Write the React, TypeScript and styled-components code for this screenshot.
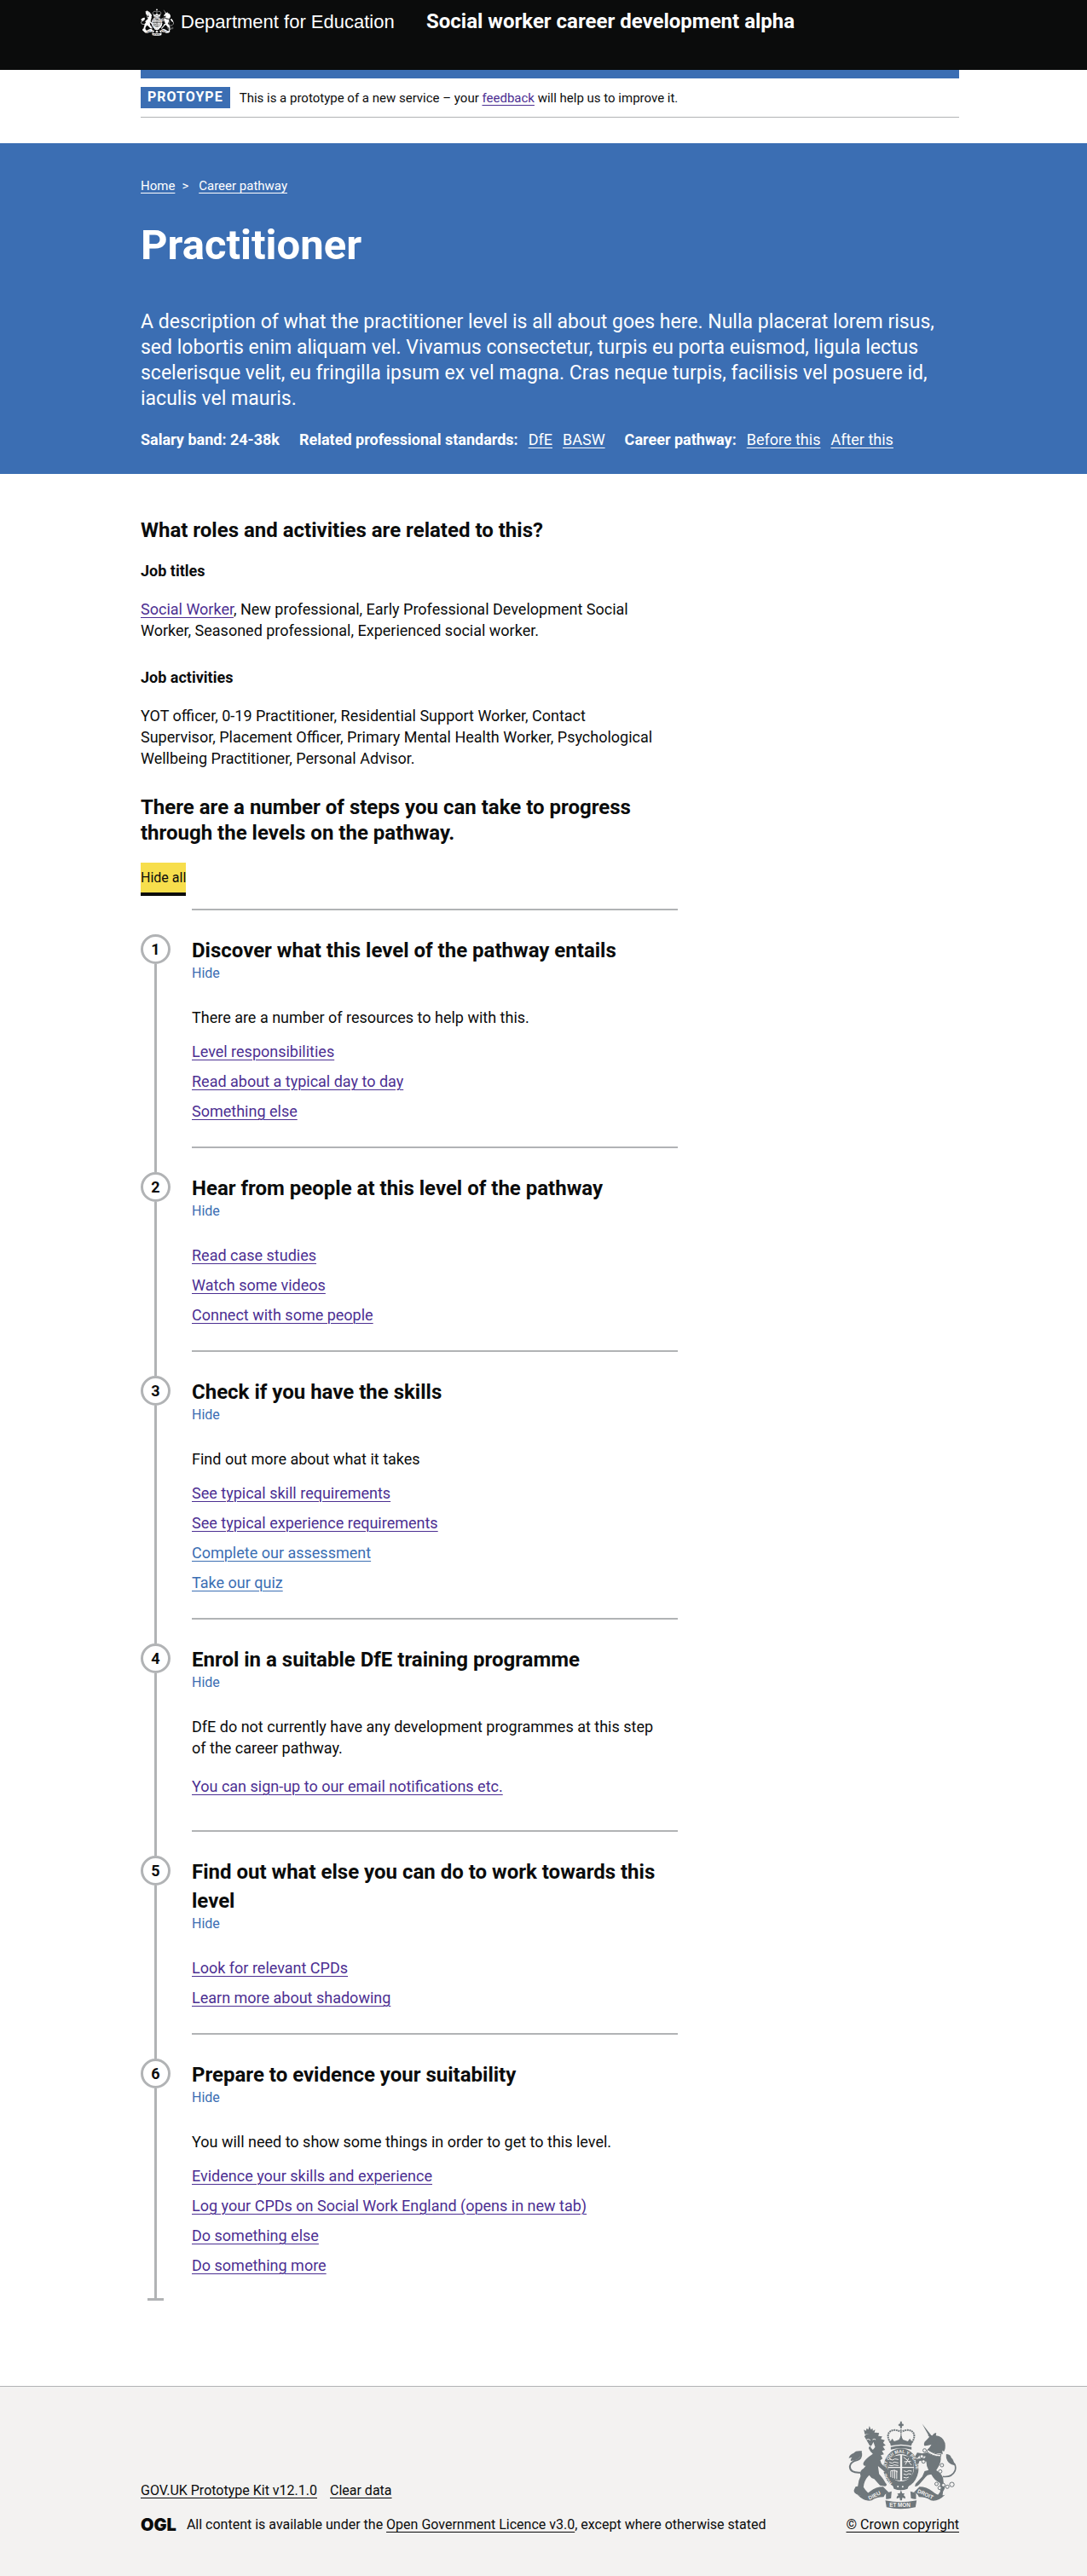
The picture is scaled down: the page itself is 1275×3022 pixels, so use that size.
import React, { useId, useState } from "react";
import styled, { createGlobalStyle } from "styled-components";

const color = {
  ink: "#0b0c0c",
  brand: "#3b6eb3",
  visited: "#4c2f92",
  border: "#b1b3b5",
  focus: "#f7de4c",
  footer: "#f3f2f1",
  crest: "#6f777b",
  white: "#ffffff",
};

const GlobalStyle = createGlobalStyle`
  *, *::before, *::after { box-sizing: border-box; }
  body {
    margin: 0;
    background: ${color.white};
    color: ${color.ink};
    font-family: Roboto, "Liberation Sans", Arial, sans-serif;
    font-size: 18px;
    line-height: 25px;
    -webkit-font-smoothing: antialiased;
  }
  h1, h2, h3, p, ul, ol { margin: 0; padding: 0; }
  ul, ol { list-style: none; }
`;

/* ---------- shared ---------- */

const Band = styled.div`
  padding: 0 15px 0 30px;
`;

const Container = styled.div`
  max-width: 960px;
  margin: 0 auto;
`;

const Link = styled.a<{ $tone?: string }>`
  color: ${(p) => p.$tone ?? color.visited};
  text-decoration: underline;
  text-decoration-thickness: 1px;
  text-underline-offset: 3px;
`;

/* ---------- header ---------- */

const HeaderBand = styled(Band).attrs({ as: "header" })`
  background: ${color.ink};
  color: ${color.white};
  height: 82px;
`;

const HeaderRow = styled(Container)`
  display: grid;
  grid-template-columns: 335px 1fr;
  align-items: start;
`;

const Brand = styled.a`
  display: flex;
  align-items: center;
  gap: 8px;
  padding-top: 10px;
  color: inherit;
  text-decoration: none;
  font-family: "Liberation Sans", Arial, sans-serif;
  font-size: 22px;
  line-height: 32px;
`;

const ServiceName = styled.a`
  padding-top: 10px;
  color: inherit;
  font-size: 24px;
  line-height: 30px;
  font-weight: 700;
  text-decoration: none;
`;

const BrandStrip = styled(Container)`
  height: 10px;
  background: ${color.brand};
`;

const PhaseBanner = styled(Container)`
  display: flex;
  align-items: center;
  gap: 11px;
  padding: 10px 0;
  margin-bottom: 30px;
  border-bottom: 1px solid ${color.border};
  font-size: 15px;
  line-height: 20px;
`;

const PhaseTag = styled.strong`
  padding: 2px 8px 3px;
  background: ${color.brand};
  color: ${color.white};
  font-size: 16px;
  letter-spacing: 1px;
`;

/* ---------- hero ---------- */

const Hero = styled(Band).attrs({ as: "section" })`
  padding-top: 40px;
  padding-bottom: 28px;
  background: ${color.brand};
  color: ${color.white};
`;

const Breadcrumbs = styled.ol`
  display: flex;
  font-size: 15px;
  line-height: 20px;

  li + li::before {
    content: ">";
    margin: 0 12px 0 8px;
  }
`;

const PageTitle = styled.h1`
  margin-top: 35px;
  font-size: 49px;
  line-height: 50px;
  font-weight: 700;
`;

const Lead = styled.p`
  margin-top: 50px;
  font-size: 23px;
  line-height: 30px;
`;

const Facts = styled.ul`
  display: flex;
  flex-wrap: wrap;
  gap: 0 23px;
  margin-top: 20px;
`;

const Fact = styled.li`
  display: flex;
  gap: 12px;
`;

const FactLabel = styled.span`
  font-weight: 700;
`;

/* ---------- body ---------- */

const Main = styled(Band).attrs({ as: "main" })`
  padding-top: 51px;
  padding-bottom: 100px;
`;

const Column = styled.div`
  max-width: 630px;
`;

const SectionTitle = styled.h2`
  font-size: 24px;
  line-height: 30px;
  font-weight: 700;
`;

const SubTitle = styled.h3`
  margin: 20px 0;
  font-size: 18px;
  line-height: 25px;
  font-weight: 700;
`;

const Paragraph = styled.p`
  margin-bottom: 30px;
  padding-right: 20px;
`;

const HideAll = styled.button`
  display: block;
  height: 39px;
  margin: 20px 0 15px;
  padding: 0;
  border: 0;
  border-bottom: 4px solid ${color.ink};
  background: ${color.focus};
  color: ${color.ink};
  font: inherit;
  font-size: 16px;
  line-height: 20px;
  cursor: pointer;
`;

/* ---------- step by step ---------- */

const StepItem = styled.li`
  display: grid;
  grid-template-columns: 35px 1fr;
  column-gap: 25px;
`;

const Rail = styled.div`
  display: flex;
  flex-direction: column;
  align-items: center;
`;

const RailLead = styled.span<{ $hidden?: boolean }>`
  width: 3px;
  height: 30px;
  background: ${(p) => (p.$hidden ? "transparent" : color.border)};
`;

const RailLine = styled.span`
  flex: 1;
  width: 3px;
  background: ${color.border};
`;

const RailEnd = styled.span`
  width: 19px;
  height: 3px;
  background: ${color.border};
`;

const StepNumber = styled.span`
  display: flex;
  align-items: center;
  justify-content: center;
  width: 35px;
  height: 35px;
  border: 3px solid ${color.border};
  border-radius: 50%;
  background: ${color.white};
  font-weight: 700;
`;

const StepBody = styled.div`
  border-top: 2px solid ${color.border};
  padding: 30px 0 29px;
`;

const StepTitle = styled.h2`
  font-size: 24px;
  line-height: 34px;
  font-weight: 700;
`;

const StepToggle = styled.button`
  display: block;
  padding: 0;
  border: 0;
  background: none;
  color: ${color.brand};
  font: inherit;
  font-size: 16px;
  line-height: 20px;
  cursor: pointer;
`;

const StepPanel = styled.div`
  margin-top: 29px;
`;

const StepText = styled.p<{ $roomy?: boolean }>`
  margin-bottom: ${(p) => (p.$roomy ? "20px" : "15px")};
  padding-right: 20px;
`;

const StepLinks = styled.ul<{ $roomy?: boolean }>`
  display: grid;
  gap: 10px;
  padding-bottom: ${(p) => (p.$roomy ? "10px" : "0")};
`;

/* ---------- footer ---------- */

const FooterBand = styled(Band).attrs({ as: "footer" })`
  padding-top: 40px;
  padding-bottom: 50px;
  border-top: 1px solid ${color.border};
  background: ${color.footer};
  font-size: 16px;
  line-height: 20px;
`;

const FooterRow = styled(Container)`
  display: flex;
  flex-wrap: wrap;
  justify-content: space-between;
  align-items: flex-end;
  gap: 30px;
`;

const FooterMeta = styled.div`
  display: grid;
  gap: 20px;
`;

const FooterLinks = styled.ul`
  display: flex;
  gap: 15px;
`;

const Licence = styled.div`
  display: flex;
  align-items: center;
  gap: 12px;
`;

const OglMark = styled.span`
  font-family: Inter, Lato, sans-serif;
  font-size: 20px;
  line-height: 20px;
  font-weight: 900;
`;

const CrownLink = styled(Link)`
  display: flex;
  flex-direction: column;
  align-items: center;
  gap: 8px;
`;

/* ---------- royal arms ---------- */

function Crest({ width, height, fill, ground }: { width: number; height: number; fill: string; ground: string }) {
  const garterId = useId();
  return (
    <svg width={width} height={height} viewBox="108 86 380 312" fill={fill} aria-hidden="true">
      {/* crown */}
      <circle cx="293" cy="100" r="6" />
      <path d="M290 88h6v24h-6zM284 97h18v6h-18z" />
      <g fill="none" stroke={fill}>
        <path d="M256 162C232 128 262 108 291 124" strokeWidth="6" strokeDasharray="6 2" />
        <path d="M331 162C355 128 325 108 296 124" strokeWidth="6" strokeDasharray="6 2" />
        <path d="M293 116v40" strokeWidth="5" strokeDasharray="5 2" />
      </g>
      <path d="M254 162l8-14 7 10 9-3 8-3 7-14 7 14 8 3 9 3 7-10 9 14-4 12q-36-10-72 0z" />
      <path d="M257 178q36-10 73 0v9q-37-8-73 0z" />
      {/* garter and shield */}
      <ellipse cx="293" cy="253" rx="62" ry="70" />
      <ellipse cx="293" cy="251" rx="46" ry="48" fill={ground} />
      <path d="M252 218q20-10 38-11v41h-42q0-18 4-30zM252 282q-4-14-4-30h42v44q-26-2-38-14zM297 252h41q-2 20-9 32-12 10-32 12z" />
      <path d="M297 207q20 2 33 11 8 12 8 30h-41z" />
      <g stroke={ground} fill="none" strokeWidth="3">
        <path d="M254 221l9 3 8-4 13 2M252 232l10 3 8-4 14 3M251 242l10 2 8-3 15 2" />
        <path d="M302 214q14 8 28 28M308 240l12-22M304 230l24-2" />
        <path d="M257 262v22M264 260v27M271 259v30M278 260v30M257 262q14-6 24 4" />
        <path d="M303 262l10 3 8-4 10 2M302 273l10 3 8-4 9 2M302 285l10 2 8-3" />
      </g>
      <path id={garterId} d="M262 305A52 59 0 1 1 324 305" fill="none" />
      <text fill={ground} fontFamily="Liberation Sans, sans-serif" fontWeight="700" fontSize="16">
        <textPath href={`#${garterId}`}>HONI SOIT QUI MAL Y PENSE</textPath>
      </text>
      <path d="M262 307q30 16 62-2l-8 20q-24 10-48 0z" />
      <circle cx="282" cy="317" r="3" fill={ground} />
      <circle cx="299" cy="318" r="3" fill={ground} />
      {/* lion */}
      <path d="M166 134l-4-17 8 4 2-9 6 5 4-13 5 13 6-5 1 9 8-4-4 17q-16-5-32 0z" />
      <path d="M164 141q6-10 20-10 18-6 32-2l-3 10 14 2-5 9 14 4-6 9 9 9-10 4 8 12-11 4 7 12-11 3 6 12-8 6q2 12 10 18l18 16q7 8-2 10l-10-4-24-20 4 28q16 18 23 32 8 8-2 11l-18-3-20-22q-12-4-18-14-18 18-20 42 6 10 16 20 10 10 0 15l-14-1-20-6q-19-8-15-19l5-10 8-2q2-22 10-36-6-18 10-26l8-10q-8 2-9-6 0-10 20-26l14-10q-10-8-15-20l4-8-4-8z" />
      <path d="M172 152q7-4 13 2M193 152q6-4 11 0M176 172q10 7 20 0" stroke={ground} strokeWidth="3" fill="none" />
      <path d="M196 160l6 18-8 10-8-8z" fill={ground} />
      <path d="M150 268q-38 2-37-22 2-16 26-22 16-6 14-24" fill="none" stroke={fill} strokeWidth="6" />
      <path d="M155 192q-22-2-28 7-14 4-18 18l12-3q-6 6-5 13 22-2 31-13 10-10 8-22z" />
      {/* unicorn */}
      <path d="M367 96l32 40-6 6z" />
      <path d="M376 160q6-6 17-18l-6-6q10-1 16 2 6-10 14-10l-1 10q24 2 32 26 3 20-4 30l-6-4 2 14-10-4q-24 2-44-13 8-6 14-18-12 4-22 5-5 0-4-8z" />
      <path d="M388 187q22 18 46 17l-2 8q-28 0-48-18z" fill="none" stroke={fill} strokeWidth="3" />
      <path d="M384 197q24 16 49 15 2 20-10 38l-6 10q18 10 24 27l2 18q10 14-2 30l-2 14q-4 10-20 4l12-18-1-30q-20-10-30-30-14-2-20 8l-22 26q-8 10-16 8l2-9 24-26 8-19 14-4q-8-14-8-30-12-4-24-2l-4 11-8-1-2-16 12-2 20-2 4-6-22-3-8 10-8-6 8-14 18 3z" />
      <path d="M440 282q32 4 43-20 8-26-18-36-12-6-10-22" fill="none" stroke={fill} strokeWidth="5" />
      <path d="M452 204q14-2 18 12 10 8 10 26-18-4-24-16-6-8-4-22z" />
      <g fill={ground} stroke={fill} strokeWidth="3">
        <circle cx="376" cy="190" r="6" />
        <circle cx="366" cy="211" r="6" />
        <circle cx="372" cy="229" r="6" />
        <circle cx="437" cy="242" r="6" />
        <circle cx="431" cy="264" r="6" />
        <circle cx="418" cy="308" r="6" />
        <circle cx="429" cy="322" r="6" />
        <circle cx="442" cy="312" r="6" />
        <circle cx="456" cy="318" r="6" />
        <circle cx="472" cy="310" r="8" />
      </g>
      {/* motto ribbon */}
      <path d="M140 346q24 6 44-12 22-16 46-16l20 20q-10 2-14 8l-4 8q-26 0-42 12-24 6-50-20zM448 346q-24 6-44-12-22-16-46-16l-20 20q10 2 14 8l4 8q26 0 42 12 24 6 50-20z" />
      <path d="M238 366q52 12 110 0l-4 24q-52 12-102 0zM240 340l20-6-2 24q-10 4-18 3zM346 340l-20-6 2 24q10 4 18 3z" />
      <path d="M290 366l-2-10-10 4q-2-8 6-12l-4-6 9-1 4-12 4 12 9 1-4 6q8 4 6 12l-10-4-2 10z" />
      <g fill={ground} fontFamily="Liberation Sans, sans-serif" fontWeight="700" fontSize="19">
        <text x="182" y="364" transform="rotate(-26 182 364)">DIEU</text>
        <text x="252" y="389">ET MON</text>
        <text x="349" y="338" transform="rotate(24 349 338)">DROIT</text>
      </g>
    </svg>
  );
}

/* ---------- content ---------- */

type StepLink = { label: string; fresh?: boolean };
type Step = { title: string; text?: string; links: StepLink[]; roomy?: boolean };

const steps: Step[] = [
  {
    title: "Discover what this level of the pathway entails",
    text: "There are a number of resources to help with this.",
    links: [{ label: "Level responsibilities" }, { label: "Read about a typical day to day" }, { label: "Something else" }],
  },
  {
    title: "Hear from people at this level of the pathway",
    links: [{ label: "Read case studies" }, { label: "Watch some videos" }, { label: "Connect with some people" }],
  },
  {
    title: "Check if you have the skills",
    text: "Find out more about what it takes",
    links: [
      { label: "See typical skill requirements" },
      { label: "See typical experience requirements" },
      { label: "Complete our assessment", fresh: true },
      { label: "Take our quiz", fresh: true },
    ],
  },
  {
    title: "Enrol in a suitable DfE training programme",
    text: "DfE do not currently have any development programmes at this step of the career pathway.",
    links: [{ label: "You can sign-up to our email notifications etc." }],
    roomy: true,
  },
  {
    title: "Find out what else you can do to work towards this level",
    links: [{ label: "Look for relevant CPDs" }, { label: "Learn more about shadowing" }],
  },
  {
    title: "Prepare to evidence your suitability",
    text: "You will need to show some things in order to get to this level.",
    links: [
      { label: "Evidence your skills and experience" },
      { label: "Log your CPDs on Social Work England (opens in new tab)" },
      { label: "Do something else" },
      { label: "Do something more" },
    ],
  },
];

export default function App() {
  const [open, setOpen] = useState<boolean[]>(steps.map(() => true));
  const allOpen = open.every(Boolean);

  return (
    <>
      <GlobalStyle />
      <HeaderBand>
        <HeaderRow>
          <Brand href="#">
            <Crest width={39} height={32} fill={color.white} ground={color.ink} />
            Department for Education
          </Brand>
          <ServiceName href="#">Social worker career development alpha</ServiceName>
        </HeaderRow>
      </HeaderBand>

      <Band>
        <BrandStrip />
        <PhaseBanner>
          <PhaseTag>PROTOYPE</PhaseTag>
          <span>
            This is a prototype of a new service – your <Link href="#">feedback</Link> will help us to improve it.
          </span>
        </PhaseBanner>
      </Band>

      <Hero>
        <Container>
          <nav aria-label="Breadcrumb">
            <Breadcrumbs>
              <li><Link href="#" $tone={color.white}>Home</Link></li>
              <li><Link href="#" $tone={color.white}>Career pathway</Link></li>
            </Breadcrumbs>
          </nav>
          <PageTitle>Practitioner</PageTitle>
          <Lead>
            A description of what the practitioner level is all about goes here. Nulla placerat lorem risus, sed
            lobortis enim aliquam vel. Vivamus consectetur, turpis eu porta euismod, ligula lectus scelerisque velit,
            eu fringilla ipsum ex vel magna. Cras neque turpis, facilisis vel posuere id, iaculis vel mauris.
          </Lead>
          <Facts>
            <Fact><FactLabel>Salary band: 24-38k</FactLabel></Fact>
            <Fact>
              <FactLabel>Related professional standards:</FactLabel>
              <Link href="#" $tone={color.white}>DfE</Link>
              <Link href="#" $tone={color.white}>BASW</Link>
            </Fact>
            <Fact>
              <FactLabel>Career pathway:</FactLabel>
              <Link href="#" $tone={color.white}>Before this</Link>
              <Link href="#" $tone={color.white}>After this</Link>
            </Fact>
          </Facts>
        </Container>
      </Hero>

      <Main>
        <Container>
          <Column>
            <SectionTitle>What roles and activities are related to this?</SectionTitle>
            <SubTitle>Job titles</SubTitle>
            <Paragraph>
              <Link href="#">Social Worker</Link>, New professional, Early Professional Development Social Worker,
              Seasoned professional, Experienced social worker.
            </Paragraph>
            <SubTitle>Job activities</SubTitle>
            <Paragraph>
              YOT officer, 0-19 Practitioner, Residential Support Worker, Contact Supervisor, Placement Officer,
              Primary Mental Health Worker, Psychological Wellbeing Practitioner, Personal Advisor.
            </Paragraph>
            <SectionTitle>There are a number of steps you can take to progress through the levels on the pathway.</SectionTitle>
            <HideAll type="button" onClick={() => setOpen(steps.map(() => !allOpen))}>
              {allOpen ? "Hide all" : "Show all"}
            </HideAll>

            <ol>
              {steps.map((step, i) => (
                <StepItem key={step.title}>
                  <Rail>
                    <RailLead $hidden={i === 0} />
                    <StepNumber>{i + 1}</StepNumber>
                    <RailLine />
                    {i === steps.length - 1 && <RailEnd />}
                  </Rail>
                  <StepBody>
                    <StepTitle>{step.title}</StepTitle>
                    <StepToggle
                      type="button"
                      aria-expanded={open[i]}
                      onClick={() => setOpen(open.map((v, n) => (n === i ? !v : v)))}
                    >
                      {open[i] ? "Hide" : "Show"}
                    </StepToggle>
                    {open[i] && (
                      <StepPanel>
                        {step.text && <StepText $roomy={step.roomy}>{step.text}</StepText>}
                        <StepLinks $roomy={step.roomy}>
                          {step.links.map((link) => (
                            <li key={link.label}>
                              <Link href="#" $tone={link.fresh ? color.brand : color.visited}>{link.label}</Link>
                            </li>
                          ))}
                        </StepLinks>
                      </StepPanel>
                    )}
                  </StepBody>
                </StepItem>
              ))}
            </ol>
          </Column>
        </Container>
      </Main>

      <FooterBand>
        <FooterRow>
          <FooterMeta>
            <FooterLinks>
              <li><Link href="#" $tone={color.ink}>GOV.UK Prototype Kit v12.1.0</Link></li>
              <li><Link href="#" $tone={color.ink}>Clear data</Link></li>
            </FooterLinks>
            <Licence>
              <OglMark>OGL</OglMark>
              <span>
                All content is available under the <Link href="#" $tone={color.ink}>Open Government Licence v3.0</Link>,
                except where otherwise stated
              </span>
            </Licence>
          </FooterMeta>
          <CrownLink href="#" $tone={color.ink}>
            <Crest width={127} height={104} fill={color.crest} ground={color.footer} />
            © Crown copyright
          </CrownLink>
        </FooterRow>
      </FooterBand>
    </>
  );
}
